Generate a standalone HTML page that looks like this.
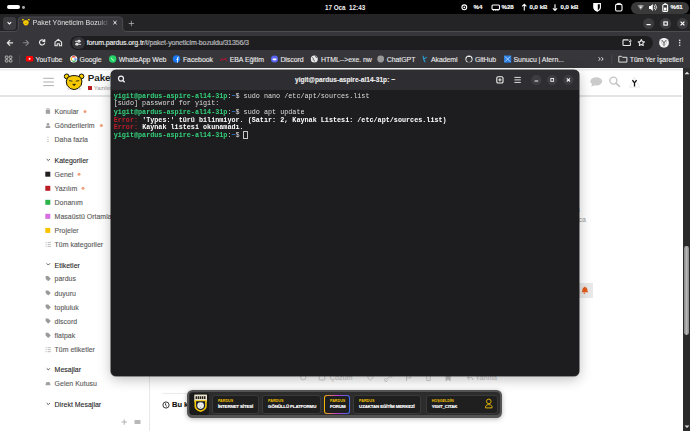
<!DOCTYPE html>
<html><head><meta charset="utf-8">
<style>
*{margin:0;padding:0;box-sizing:border-box}
html,body{width:690px;height:431px;overflow:hidden;background:#fff}
body{position:relative;font-family:"Liberation Sans",sans-serif}
.a{position:absolute}
.t{position:absolute;white-space:nowrap;line-height:1}
#topbar{left:0;top:0;width:690px;height:14px;background:#000}
#tabs{left:0;top:14px;width:690px;height:19px;background:#242427}
#toolbar{left:0;top:33px;width:690px;height:35px;background:#37373b}
#page{left:0;top:68px;width:683px;height:363px;background:#fff}
#sb{left:683px;top:68px;width:7px;height:363px;background:#2b2b2b}
.bmt{top:4.8px;font-size:6.95px;color:#ededed;letter-spacing:-0.05px;-webkit-text-stroke:0.1px #ededed}
.sdt{font-size:6.95px;letter-spacing:0.02px;-webkit-text-stroke:0.12px currentColor}
.cell{top:4.9px;height:19.7px;border-radius:3px;background:#1f1f1f;border:0.8px solid #3a3a3a;padding:3.6px 0 0 4.8px}
.d1{font-size:3.7px;font-weight:bold;color:#f2c200;line-height:4.6px;white-space:nowrap}
.d2{font-size:4.4px;font-weight:bold;color:#fff;line-height:5.6px;white-space:nowrap;letter-spacing:-0.12px;-webkit-text-stroke:0.15px #fff}
.side{font-size:7.2px;color:#555}
#term{left:111px;top:70px;width:468px;height:306px;background:#1d1d20;border-radius:5px;box-shadow:0 0 0 0.6px rgba(0,0,0,.7),0 3px 13px rgba(0,0,0,.27);overflow:hidden}
#thead{left:0;top:0;width:468px;height:20px;background:#2e2e32}
.mono{font-family:"Liberation Mono",monospace;font-size:6.77px;line-height:7.273px;white-space:pre;transform:scaleY(1.1);transform-origin:0 0}
</style></head><body>
<div id="topbar" class="a">
  <div class="a" style="left:7px;top:5px;width:13px;height:4.2px;border-radius:2.1px;background:#fff"></div>
  <div class="a" style="left:22.3px;top:5.8px;width:2.8px;height:2.8px;border-radius:50%;background:#aaa"></div>
  <div class="t" style="left:324.9px;top:4.5px;font-size:6.3px;font-weight:bold;color:#f4f4f4">17 Oca&nbsp;&nbsp;12:43</div>
  <div class="t" style="left:473.5px;top:4.2px;font-size:6.1px;font-weight:bold;color:#fff;-webkit-text-stroke:0.15px #fff">%4</div>
  <div class="t" style="left:501.5px;top:4.2px;font-size:6.1px;font-weight:bold;color:#fff;-webkit-text-stroke:0.15px #fff">%28</div>
  <div class="t" style="left:529.5px;top:4.2px;font-size:6.1px;font-weight:bold;color:#fff;-webkit-text-stroke:0.15px #fff">0,0 kB</div>
  <div class="t" style="left:560.5px;top:4.2px;font-size:6.1px;font-weight:bold;color:#fff;-webkit-text-stroke:0.15px #fff">0,0 kB</div>
  <div class="a" style="left:631px;top:2px;width:57.5px;height:11.5px;border-radius:6px;background:#3a3a3a"></div>
  <div class="t" style="left:670.5px;top:4.2px;font-size:6.1px;font-weight:bold;color:#fff;-webkit-text-stroke:0.15px #fff">%61</div>
  <svg class="a" style="left:0;top:0" width="690" height="14" viewBox="0 0 690 14" fill="none" stroke="#fff" stroke-width="1.1">
    <circle cx="464.3" cy="7.3" r="2.4"/><circle cx="464.3" cy="7.3" r="0.9" fill="#fff" stroke="none"/>
    <rect x="492" y="5" width="7.5" height="4.6" rx="1"/><path d="M493.5 9.6v1.2M495.7 9.6v1.2M497.9 9.6v1.2" stroke-width="0.8"/>
    <path d="M524.3 10.5V4.3M522.2 6.3l2.1-2.1 2.1 2.1"/>
    <path d="M555 4.3v6.2M552.9 8.4l2.1 2.1 2.1-2.1"/>
    <path d="M594 3.6h6.4v4c0 2-1.6 3-3.2 3.6-1.6-.6-3.2-1.6-3.2-3.6z"/><path d="M597.2 3.6v7.2c-1.6-.6-3.2-1.6-3.2-3.6v-3.6z" fill="#fff"/>
    <rect x="615.6" y="4.4" width="6.4" height="6.6" rx="1.2"/><path d="M617.3 4.4v-1h3v1" stroke-width="0.9"/>
    <path d="M637.5 5.5a7 7 0 0 1 6.5 0L640.7 10z" fill="#999" stroke="none"/><path d="M640.2 6.4h1.2v1.6h-1.2z" fill="#fff" stroke="none"/>
    <path d="M649 6h1.6l2.2-2v7l-2.2-2H649z" fill="#fff" stroke="none"/><path d="M654 5.3a2.8 2.8 0 0 1 0 3.9M655.2 4.2a4.4 4.4 0 0 1 0 6.1" stroke-width="0.8"/>
    <rect x="662.8" y="4.5" width="4.8" height="7" rx="1"/><path d="M664.2 3.8h2" /><rect x="663.9" y="7.6" width="2.6" height="2.9" fill="#fff" stroke="none"/>
  </svg>
</div>
<div id="tabs" class="a">
  <div class="a" style="left:3px;top:3px;width:13px;height:12.5px;border-radius:3px;background:#3b3b40"></div>
  <svg class="a" style="left:0;top:0" width="690" height="19" viewBox="0 14 690 19" fill="none" stroke="#fff" stroke-width="1.1">
    <path d="M7.6 22.2l1.8 1.7 1.8-1.7"/>
    <path d="M0 31.5H14c3 0 4.3-1.5 4.3-4V20.5c0-2.2 1.3-3.5 3.5-3.5h97.4c2.2 0 3.5 1.3 3.5 3.5v7c0 2.5 1.3 4 4.3 4H690V33H0z" fill="#37373b" stroke="none"/>
    <path d="M0 31.5H14c3 0 4.3-1.5 4.3-4V20.5c0-2.2 1.3-3.5 3.5-3.5h97.4c2.2 0 3.5 1.3 3.5 3.5v7c0 2.5 1.3 4 4.3 4H690" stroke="#4b4b50" stroke-width="1"/>
    <path d="M113.4 21l3.2 3.2M116.6 21l-3.2 3.2" stroke-width="1"/>
    <path d="M131.4 20.8v5.4M128.7 23.5h5.4" stroke="#bdbdbd" stroke-width="0.7"/>
    <circle cx="648.6" cy="23.5" r="5.5" fill="#3b3b40" stroke="none"/>
    <path d="M646.5 24.6h4.2" stroke-width="1.2"/>
    <circle cx="665.6" cy="23.5" r="5.5" fill="#3b3b40" stroke="none"/>
    <rect x="663.9" y="21.9" width="3.4" height="3.2" stroke-width="1.1"/>
    <circle cx="682.5" cy="23.5" r="5.5" fill="#3b3b40" stroke="none"/>
    <path d="M680.6 21.6l3.8 3.8M684.4 21.6l-3.8 3.8" stroke-width="1.2"/>
  </svg>
  <svg class="a" style="left:21px;top:3.5px" width="10" height="9" viewBox="0 0 10 9"><circle cx="2" cy="1.8" r="1.4" fill="#f8d000" stroke="#1a1a40" stroke-width="0.6"/><circle cx="7.8" cy="1.8" r="1.4" fill="#f8d000" stroke="#1a1a40" stroke-width="0.6"/><path d="M2.3 2.4Q4.9 0.9 7.5 2.4Q8.6 4 7.8 5.8Q6.6 8 4.9 8Q3.2 8 2 5.8Q1.2 4 2.3 2.4z" fill="#f5c800" stroke="#1a1a40" stroke-width="0.6"/><path d="M4.3 5.2h1.2l-.6.7z" fill="#222"/></svg>
  <div class="t" style="left:32.5px;top:6.4px;font-size:7.1px;color:#e0e0e0;width:76px;overflow:hidden;-webkit-mask-image:linear-gradient(90deg,#000 85%,transparent)">Paket Yöneticim Bozuldu</div>
</div>
<div id="toolbar" class="a">
  <div class="a" style="left:70px;top:2.5px;width:582.5px;height:14.5px;border-radius:7.25px;background:#1e1e21"></div>
  <div class="a" style="left:71.5px;top:3.5px;width:13px;height:12.5px;border-radius:6.25px;background:#36363a"></div>
  <div class="t" style="left:86.7px;top:6.4px;font-size:7px;letter-spacing:-0.12px;color:#ececec;-webkit-text-stroke:0.15px #ececec">forum.pardus.org.tr<span style="color:#9a9a9e">/t/paket-yoneticim-bozuldu/31356/3</span></div>
  <svg class="a" style="left:0;top:0" width="690" height="35" viewBox="0 33 690 35" fill="none" stroke="#e8e8e8" stroke-width="1.1" stroke-linecap="round" stroke-linejoin="round">
    <path d="M12.6 42.8H7.3M9.8 40.3l-2.5 2.5 2.5 2.5" stroke-width="1.2"/>
    <path d="M23.3 42.8h5.3M26.1 40.3l2.5 2.5-2.5 2.5" stroke="#85858a"/>
    <path d="M44.3 41a2.6 2.6 0 1 0 .3 2.1M44.7 39.6v1.9h-1.9" stroke-width="1.2"/>
    <path d="M55 42.2l3.3-2.8 3.3 2.8v3.6h-2.2v-2.1h-2.2v2.1H55z"/>
    <path d="M75.5 41.2h5M75.5 44.2h5"/><circle cx="79" cy="41.2" r="0.9" fill="#36363a"/><circle cx="77" cy="44.2" r="0.9" fill="#36363a"/>
    <path d="M628 39.9h-4.2a.8.8 0 0 0-.8.8v4a.8.8 0 0 0 .8.8h5.8a.8.8 0 0 0 .8-.8v-1.4"/><path d="M630.2 39.6v2.6M629 41l1.2 1.2 1.2-1.2" stroke-width="0.9"/>
    <path d="M641.3 39.6l.95 2 2.15.25-1.55 1.5.42 2.15-1.97-1.05-1.97 1.05.42-2.15-1.55-1.5 2.15-.25z"/>
    <circle cx="664" cy="42.8" r="4.9" fill="#f4f4f4" stroke="none"/>
    <path d="M661.9 40.2l2.1 2.6 2.1-2.6M664 42.8v3" stroke="#555" stroke-width="1"/><path d="M661.3 40.6c0 2 .8 4.6 2.7 5.4 1.9-.8 2.7-3.4 2.7-5.4" stroke="#aaa" stroke-width="0.5"/>
    <circle cx="679.7" cy="40.4" r="0.8" fill="#e8e8e8" stroke="none"/><circle cx="679.7" cy="42.8" r="0.8" fill="#e8e8e8" stroke="none"/><circle cx="679.7" cy="45.2" r="0.8" fill="#e8e8e8" stroke="none"/>
  </svg>
</div>
<div id="bm" class="a" style="left:0;top:52px;width:690px;height:16px">
  <div class="t bmt" style="left:35.5px">YouTube</div>
  <div class="t bmt" style="left:79.6px">Google</div>
  <div class="t bmt" style="left:118.8px">WhatsApp Web</div>
  <div class="t bmt" style="left:182.9px">Facebook</div>
  <div class="t bmt" style="left:229.7px">EBA Eğitim</div>
  <div class="t bmt" style="left:280.4px">Discord</div>
  <div class="t bmt" style="left:321px">HTML--&gt;exe. nw</div>
  <div class="t bmt" style="left:386.8px">ChatGPT</div>
  <div class="t bmt" style="left:430.9px">Akademi</div>
  <div class="t bmt" style="left:474.9px">GitHub</div>
  <div class="t bmt" style="left:513.5px">Sunucu | Atern...</div>
  <div class="t bmt" style="left:629.7px">Tüm Yer İşaretleri</div>
  <svg class="a" style="left:0;top:0" width="690" height="16" viewBox="0 52 690 16" fill="none" stroke="#e0e0e0" stroke-width="1">
    <rect x="5.3" y="56" width="2.6" height="2.4" rx="0.7" stroke="#d8d8d8" stroke-width="0.8"/><rect x="9.3" y="56" width="2.6" height="2.4" rx="0.7" stroke="#d8d8d8" stroke-width="0.8"/>
    <rect x="5.3" y="59.6" width="2.6" height="2.4" rx="0.7" stroke="#d8d8d8" stroke-width="0.8"/><rect x="9.3" y="59.6" width="2.6" height="2.4" rx="0.7" stroke="#d8d8d8" stroke-width="0.8"/>
    <path d="M19.6 55v8.5" stroke="#48484d"/>
    <rect x="26" y="56" width="7.2" height="5.6" rx="1.4" fill="#ff0000" stroke="none"/><path d="M28.8 57.4v2.8l2.3-1.4z" fill="#fff" stroke="none"/>
    <circle cx="73.7" cy="59" r="3.6" fill="#fff" stroke="none"/>
    <path d="M75.5 57.3a2.4 2.4 0 0 0-3.6.2" stroke="#ea4335" stroke-width="1.1"/><path d="M71.9 57.5a2.4 2.4 0 0 0 0 3" stroke="#fbbc05" stroke-width="1.1"/><path d="M71.9 60.5a2.4 2.4 0 0 0 3.9-.2" stroke="#34a853" stroke-width="1.1"/><path d="M75.8 60.3a2.4 2.4 0 0 0 .3-1.3h-2.2" stroke="#4285f4" stroke-width="1.1"/>
    <circle cx="112.7" cy="59" r="3.7" fill="#25d366" stroke="none"/><path d="M111.3 57.8c.3 1.3 1.2 2.2 2.6 2.6" stroke="#fff" stroke-width="0.8"/>
    <circle cx="176.5" cy="59" r="3.7" fill="#1877f2" stroke="none"/><path d="M177.5 62.7v-4.6h1.1M176.3 59.5h2.2M177.5 58.1c0-.8.3-1.2 1.1-1.2" stroke="#fff" stroke-width="0.8"/>
    <path d="M220 61l2-2.4 1.6 1.6 1.5-2 1.8 2.6" stroke="#c8102e" stroke-width="1"/>
    <circle cx="274.5" cy="59" r="3.6" fill="#5865f2" stroke="none"/><path d="M272.6 58.4h3.8v1.6c-1.2.6-2.6.6-3.8 0z" fill="#fff" stroke="none"/>
    <circle cx="314.3" cy="59" r="3.5" fill="#e8e8e8" stroke="none"/><path d="M312.2 57.5c1 .2 1.5 1.2 1 2.2l1.7 1.5M315.5 56l.6 1.4 1.2-.3" stroke="#333337" stroke-width="0.8"/>
    <circle cx="380.7" cy="59" r="3.4" fill="#9a9a9a" stroke="none"/>
    <path d="M423 55.8c.2 2.2.7 4.6 2.2 6.3M424 58.6c1.2-.2 2-.8 2.6-1.5" stroke="#2a9fd6" stroke-width="1.1"/>
    <circle cx="469" cy="59" r="3.6" fill="#f0f0f0" stroke="none"/><path d="M467.5 62.4v-1.3c-.8 0-1.2-.6-1.2-1.6s.3-1.4.8-1.8l-.1-1 1 .4h2l1-.4-.1 1c.5.4.8.8.8 1.8s-.4 1.6-1.2 1.6v1.3" fill="#37373b" stroke="none"/>
    <rect x="504" y="55.5" width="7.2" height="7.2" fill="#2a7de1" stroke="none"/><path d="M505 56.5l5.2 5.2M510.2 56.5l-5.2 5.2" stroke="#bfe0ff" stroke-width="0.9"/>
    <path d="M598.6 57.2l1.7 1.8-1.7 1.8M601.5 57.2l1.7 1.8-1.7 1.8" stroke-width="1"/>
    <path d="M611.8 55v8.5" stroke="#48484d"/>
    <path d="M618.8 56.3h2.8l1 1h4.3v4.8h-8.1z"/>
  </svg>
</div>
<div id="page" class="a"></div>
<div id="phdr" class="a" style="left:0;top:68px;width:683px;height:29px">
  <div class="a" style="left:0;top:0;width:683px;height:3px;background:linear-gradient(#fcfcfc 0,#fcfcfc 25%,#ebebeb 45%,#eeeeee 70%,#fff 100%)"></div>
  <div class="a" style="left:0;top:27.4px;width:682px;height:1.3px;background:#e4e4e4"></div>
  <div class="t" style="left:87.7px;top:4.6px;font-size:9.8px;font-weight:bold;color:#222">Paket Yöneticim Bozuldu</div>
  <div class="a" style="left:87.5px;top:18px;width:4.5px;height:3.6px;background:#bb1d25"></div>
  <div class="t" style="left:93.8px;top:16.8px;font-size:6px;color:#919191">Yazılım</div>
</div>
<svg class="a" style="left:0;top:0" width="690" height="100" viewBox="0 0 690 100" fill="none" stroke="#999" stroke-width="1">
  <path d="M43.3 78.3h10.6M43.3 82h10.6M43.3 85.6h10.6" stroke="#a6a6a6" stroke-width="0.9"/>
  <circle cx="66.7" cy="76.4" r="2.4" fill="#f8d000" stroke="#111" stroke-width="1"/>
  <circle cx="81.5" cy="76.4" r="2.4" fill="#f8d000" stroke="#111" stroke-width="1"/>
  <path d="M67.6 77.4Q74.1 73.6 80.6 77.4Q83 81 81.2 85.2Q78.3 89.6 74.1 89.6Q69.9 89.6 67 85.2Q65.2 81 67.6 77.4z" fill="#f5c800" stroke="#111" stroke-width="1"/>
  <path d="M69 80.6l3.4.6M79.2 80.6l-3.4.6" stroke="#222" stroke-width="0.9"/>
  <path d="M72.6 84.2h3l-1.5 1.6z" fill="#111" stroke="#111" stroke-width="0.5"/>
  <path d="M66.5 88l3 .8M67.5 90l2.3-.8M81.7 88l-3 .8M80.7 90l-2.3-.8" stroke="#bbb" stroke-width="0.5"/>
  <ellipse cx="596.3" cy="81.3" rx="5.9" ry="4.1" fill="#cbcbcb" stroke="none"/>
  <path d="M591.2 86.8l1.2-3.4 2.6 1.5z" fill="#cbcbcb" stroke="none"/>
  <circle cx="613.4" cy="80.6" r="3.5" stroke="#c4c4c4" stroke-width="1.4"/><path d="M616 83.2l3.9 3.7" stroke="#c4c4c4" stroke-width="1.6"/>
  <path d="M634.5 77.2l5 10h-10z" stroke="#d8d8d8" stroke-width="0.5"/>
  <path d="M632.4 80.2l2.1 2.8 2.1-2.8M634.5 83v3.4" stroke="#111" stroke-width="1.3"/>
</svg>
<div id="side" class="a" style="left:0;top:0;width:0;height:0">
  <div class="t sdt" style="left:54.6px;top:108.9px;color:#5c5c5c">Konular</div>
  <div class="t sdt" style="left:54.6px;top:123.1px;color:#5c5c5c">Gönderilerim</div>
  <div class="t sdt" style="left:54.6px;top:136.8px;color:#5c5c5c">Daha fazla</div>
  <div class="t sdt" style="left:54.6px;top:158.1px;color:#2a2a2a">Kategoriler</div>
  <div class="t sdt" style="left:54.6px;top:171.7px;color:#5c5c5c">Genel</div>
  <div class="t sdt" style="left:54.6px;top:185.8px;color:#5c5c5c">Yazılım</div>
  <div class="t sdt" style="left:54.6px;top:199.8px;color:#5c5c5c">Donanım</div>
  <div class="t sdt" style="left:54.6px;top:213.8px;color:#5c5c5c">Masaüstü Ortamları</div>
  <div class="t sdt" style="left:54.6px;top:227.9px;color:#5c5c5c">Projeler</div>
  <div class="t sdt" style="left:54.6px;top:241.9px;color:#5c5c5c">Tüm kategoriler</div>
  <div class="t sdt" style="left:54.6px;top:262.5px;color:#2a2a2a">Etiketler</div>
  <div class="t sdt" style="left:54.6px;top:276.2px;color:#5c5c5c">pardus</div>
  <div class="t sdt" style="left:54.6px;top:290.5px;color:#5c5c5c">duyuru</div>
  <div class="t sdt" style="left:54.6px;top:304.7px;color:#5c5c5c">topluluk</div>
  <div class="t sdt" style="left:54.6px;top:318.6px;color:#5c5c5c">discord</div>
  <div class="t sdt" style="left:54.6px;top:332.9px;color:#5c5c5c">flatpak</div>
  <div class="t sdt" style="left:54.6px;top:347.2px;color:#5c5c5c">Tüm etiketler</div>
  <div class="t sdt" style="left:54.6px;top:367.4px;color:#2a2a2a">Mesajlar</div>
  <div class="t sdt" style="left:54.6px;top:381.1px;color:#5c5c5c">Gelen Kutusu</div>
  <div class="t sdt" style="left:54.6px;top:402.1px;color:#2a2a2a">Direkt Mesajlar</div>
<svg class="a" style="left:0;top:0" width="160" height="431" viewBox="0 0 160 431" fill="none" stroke="#8f8f8f" stroke-width="1">
  <path d="M45.8 109.6h4.3v4.2h-4.3z" fill="#a0a0a0" stroke="none"/><path d="M46.4 108.8h3.2" stroke="#a0a0a0" stroke-width="0.8"/>
  <circle cx="85" cy="111.4" r="1.5" fill="#f0a07a" stroke="none"/>
  <circle cx="48" cy="124.3" r="1.3" fill="#a0a0a0" stroke="none"/><path d="M45.6 128.0c0-2 1-2.6 2.4-2.6s2.4.6 2.4 2.6z" fill="#a0a0a0" stroke="none"/>
  <circle cx="101.4" cy="125.6" r="1.5" fill="#f0a07a" stroke="none"/>
  <path d="M48 136.7v.9M48 138.9v.9M48 141.1v.9" stroke="#a0a0a0" stroke-width="1.1"/>
  <path d="M46.7 159.0l1.6 1.6 1.6-1.6" stroke="#555"/>
  <rect x="45.3" y="171.7" width="5" height="5" fill="#231f20" stroke="none"/>
  <circle cx="79" cy="174.2" r="1.5" fill="#f0a07a" stroke="none"/>
  <rect x="45.3" y="185.8" width="5" height="5" fill="#bb1d25" stroke="none"/>
  <circle cx="83" cy="188.3" r="1.5" fill="#f0a07a" stroke="none"/>
  <rect x="45.3" y="199.8" width="5" height="5" fill="#2bb34a" stroke="none"/>
  <rect x="45.3" y="213.8" width="5" height="5" fill="#d66ee0" stroke="none"/>
  <rect x="45.3" y="227.9" width="5" height="5" fill="#fdc300" stroke="none"/>
  <path d="M45.6 242.4h1M45.6 244.4h1M45.6 246.4h1M47.6 242.4h3.2M47.6 244.4h3.2M47.6 246.4h3.2" stroke="#aaa" stroke-width="0.8"/>
  <path d="M46.7 263.4l1.6 1.6 1.6-1.6" stroke="#555"/>
  <path d="M45.6 276.1h2.6l2.6 2.6-2.6 2.6-2.6-2.6z" fill="#9a9a9a" stroke="none"/>
  <path d="M45.6 290.4h2.6l2.6 2.6-2.6 2.6-2.6-2.6z" fill="#9a9a9a" stroke="none"/>
  <path d="M45.6 304.6h2.6l2.6 2.6-2.6 2.6-2.6-2.6z" fill="#9a9a9a" stroke="none"/>
  <path d="M45.6 318.5h2.6l2.6 2.6-2.6 2.6-2.6-2.6z" fill="#9a9a9a" stroke="none"/>
  <path d="M45.6 332.8h2.6l2.6 2.6-2.6 2.6-2.6-2.6z" fill="#9a9a9a" stroke="none"/>
  <path d="M45.6 347.7h1M45.6 349.7h1M45.6 351.7h1M47.6 347.7h3.2M47.6 349.7h3.2M47.6 351.7h3.2" stroke="#aaa" stroke-width="0.8"/>
  <path d="M46.7 368.3l1.6 1.6 1.6-1.6" stroke="#555"/>
  <path d="M45.6 385.2h4.8v-1.2l-1-2h-2.8l-1 2z" fill="#a0a0a0" stroke="none"/>
  <path d="M46.7 403.0l1.6 1.6 1.6-1.6" stroke="#555"/>
  <path d="M149.5 376v55" stroke="#e8e8e8"/>
  <path d="M121.5 422h5.5M124.25 419.3v5.5" stroke="#aaa" stroke-width="0.9"/>
  <rect x="134.5" y="420" width="6" height="4" rx="0.6" fill="#b8b8b8" stroke="none"/>
</svg>
</div>
<div class="t" style="left:575.6px;top:205.8px;font-size:7.4px;font-weight:bold;color:#333">s</div>
<div class="t" style="left:578.6px;top:215.8px;font-size:7px;color:#9a9a9a">ca</div>
<div class="a" style="left:570px;top:283px;width:22.6px;height:15px;background:#e9e9e9"></div>
<svg class="a" style="left:0;top:0" width="690" height="431" viewBox="0 0 690 431" fill="none" stroke="#c8c8c8" stroke-width="0.9">
  <path d="M581.6 292.2c.6-.6.8-1.3.8-2.3 0-1.4.8-2.3 1.9-2.6.2-.5.4-.7.6-.7s.4.2.6.7c1.1.3 1.9 1.2 1.9 2.6 0 1 .2 1.7.8 2.3z" fill="#e45c1a" stroke="none"/>
  <circle cx="584.3" cy="293.2" r="0.7" fill="#e45c1a" stroke="none"/>
  <circle cx="303.3" cy="377.3" r="2.6"/>
  <rect x="319.2" y="374.8" width="5.6" height="5.2" rx="0.6"/>
  <path d="M370.4 376.4c.9-1.4 3-1.2 2.6.8-.3 1.2-2.6 3-2.6 3s-2.3-1.8-2.6-3c-.4-2 1.7-2.2 2.6-.8"/>
  <path d="M386.6 379.6l3.4-3.4M385.8 378.1l-1 1a1.6 1.6 0 0 0 2.2 2.2l1-1M390.8 377.8l1-1a1.6 1.6 0 0 0-2.2-2.2l-1 1"/>
  <path d="M406.5 381v-6.4h4.4l-.6 1.6.6 1.6h-4.4"/>
  <path d="M426.2 375.2h4.6M426.8 375.8v4.8h3.4v-4.8"/>
  <path d="M446 374.6h4.2v6.2l-2.1-1.6-2.1 1.6z" fill="#c8c8c8"/>
  <path d="M469.6 375.4l-2.4 2.2 2.4 2.2M467.4 377.6h3.4c1.4 0 2 .8 2 2.4"/>
</svg>
<div class="t" style="left:329.8px;top:373.6px;font-size:7.2px;color:#c4c4c4">Çözüm</div>
<div class="t" style="left:475.2px;top:373.6px;font-size:7.2px;color:#c4c4c4">Yanıtla</div>
<div class="a" style="left:162px;top:392.5px;width:30px;height:1px;background:#ececec"></div>
<svg class="a" style="left:161.3px;top:400.2px" width="10" height="10" viewBox="0 0 10 10" fill="none" stroke="#222" stroke-width="0.9"><circle cx="5" cy="5" r="3.1"/><path d="M4.6 3.3v1.9l1.3 1.2"/></svg>
<div class="t" style="left:172.1px;top:401.2px;font-size:7.5px;font-weight:bold;color:#111;letter-spacing:-0.1px;-webkit-text-stroke:0.15px #111">Bu konu</div>
<div id="dock" class="a" style="left:186.5px;top:389.8px;width:315.5px;height:27.8px;border-radius:5.5px;background:#545454;box-shadow:0 1px 5px rgba(0,0,0,.3)">
  <div class="a" style="left:2.2px;top:2.2px;width:311.1px;height:23.4px;border-radius:4px;background:#2c2c2c"></div>
  <div class="a" style="left:3.3px;top:3.1px;width:19px;height:21.7px;border-radius:2.5px;background:#1a1a1a"></div>
  <div class="a cell" style="left:25.6px;width:46.8px"><div class="d1">PARDUS</div><div class="d2">İNTERNET SİTESİ</div></div>
  <div class="a cell" style="left:75.8px;width:58.7px"><div class="d1">PARDUS</div><div class="d2">GÖNÜLLÜ PLATFORMU</div></div>
  <div class="a cell" style="left:137.7px;width:25.8px;border:0.8px solid transparent;background:linear-gradient(#1f1f1f,#1f1f1f) padding-box,linear-gradient(90deg,#f5b800,#c03ad0,#3b6cf0) border-box"><div class="d1">PARDUS</div><div class="d2">FORUM</div></div>
  <div class="a cell" style="left:166.8px;width:67.9px"><div class="d1">PARDUS</div><div class="d2">UZAKTAN EĞİTİM MERKEZİ</div></div>
  <div class="a cell" style="left:239.4px;width:71.8px"><div class="d1">HOŞGELDİN</div><div class="d2">YIGIT_CITAK</div></div>
  <svg class="a" style="left:0;top:0" width="316" height="27.5" viewBox="186 390 316 27.5" fill="none">
    <path d="M193.3 394.8h12.6v5.2l-.4.4v-0.2z" fill="#e9e2cc"/>
    <path d="M193.3 394.8h12.6v6.4c0 .6-.4 1-.4 1H193.7s-.4-.4-.4-1z" fill="#ece4cc"/>
        <path d="M194.6 396.2h1.5v2.8h-1.5zM196.7 396.2h1.5v2.8h-1.5zM198.8 396.2h1.5v2.8h-1.5zM200.9 396.2h1.5v2.8h-1.5zM203 396.2h1.5v2.8h-1.5z" fill="#222"/>
    <path d="M193.5 400.2h12.2v5.8c0 3.2-2.8 5-6.1 6-3.3-1-6.1-2.8-6.1-6z" fill="#f5c800"/>
    <path d="M195.1 401.3h9v4.6c0 2.3-2 3.6-4.5 4.4-2.5-.8-4.5-2.1-4.5-4.4z" fill="#121a3a"/>
    <circle cx="199.6" cy="405.6" r="3.3" fill="#efefea"/>
    <path d="M198.2 405h.6M200.4 405h.6M199.2 407l.4.5.4-.5" stroke="#555" stroke-width="0.5"/>
    <circle cx="487.8" cy="401.4" r="2.3" stroke="#f2c200" stroke-width="0.9"/>
    <path d="M484.6 407.9c-.4-1.6.6-3.3 3.2-3.3s3.6 1.7 3.2 3.3z" stroke="#f2c200" stroke-width="0.9" stroke-linejoin="round"/>
  </svg>
</div>
<div id="sb" class="a">
  <div class="a" style="left:1.3px;top:177.5px;width:4.7px;height:89.5px;border-radius:2.4px;background:linear-gradient(90deg,#858585,#b8b8b8 50%,#8a8a8a)"></div>
  <svg class="a" style="left:0;top:0" width="7" height="363" viewBox="683 68 7 363"><path d="M684.5 74.3l2.5-2.6 2.5 2.6z" fill="#ddd"/><path d="M684.5 425.5l2.5 2.6 2.5-2.6z" fill="#ddd"/></svg>
</div>
<div id="term" class="a">
  <div id="thead" class="a">
    <div class="t" style="left:0;width:468px;text-align:center;top:6.8px;font-size:6.6px;font-weight:bold;color:#f0f0f0;-webkit-text-stroke:0.1px #f0f0f0">yigit@pardus-aspire-al14-31p: ~</div>
    <svg class="a" style="left:0;top:0" width="468" height="20" viewBox="111 70 468 20" fill="none" stroke="#f2f2f2" stroke-width="1.1">
      <circle cx="121" cy="78.6" r="2.5" stroke-width="1.2"/><path d="M122.9 80.5l1.8 1.8" stroke-width="1.3"/>
      <rect x="496.8" y="76.8" width="6.2" height="6.2" rx="1.3"/><path d="M499.9 78.3v3.2M498.3 79.9h3.2" stroke-width="1"/>
      <path d="M514.4 77.4h6.4M514.4 79.9h6.4M514.4 82.4h6.4" stroke-width="0.9"/>
      <circle cx="536.4" cy="79.9" r="5.2" fill="#3c3c41" stroke="none"/><path d="M534.6 81h3.6" stroke-width="1"/>
      <circle cx="552.2" cy="79.9" r="5.2" fill="#3c3c41" stroke="none"/><rect x="550.8" y="78.5" width="2.8" height="2.8" stroke-width="0.9"/>
      <circle cx="568.4" cy="79.9" r="5.2" fill="#3c3c41" stroke="none"/><path d="M566.8 78.3l3.2 3.2M570 78.3l-3.2 3.2" stroke-width="1.1"/>
    </svg>
  </div>
  <div class="a mono" style="left:2.7px;top:21.5px;color:#dedede"><b style="color:#33d17a">yigit@pardus-aspire-al14-31p</b>:<b style="color:#3584e4">~</b>$ sudo nano /etc/apt/sources.list
[sudo] password for yigit:
<b style="color:#33d17a">yigit@pardus-aspire-al14-31p</b>:<b style="color:#3584e4">~</b>$ sudo apt update
<b style="color:#c01c28">Error:</b> <b style="color:#fff">'Types:' türü bilinmiyor. (Satır: 2, Kaynak Listesi: /etc/apt/sources.list)</b>
<b style="color:#c01c28">Error:</b> <b style="color:#fff">Kaynak listesi okunamadı.</b>
<b style="color:#33d17a">yigit@pardus-aspire-al14-31p</b>:<b style="color:#3584e4">~</b>$ </div>
  <div class="a" style="left:132px;top:60.8px;width:4.6px;height:8.5px;border:0.9px solid #c8c8c8;border-radius:0.5px"></div>
</div>
</body></html>
